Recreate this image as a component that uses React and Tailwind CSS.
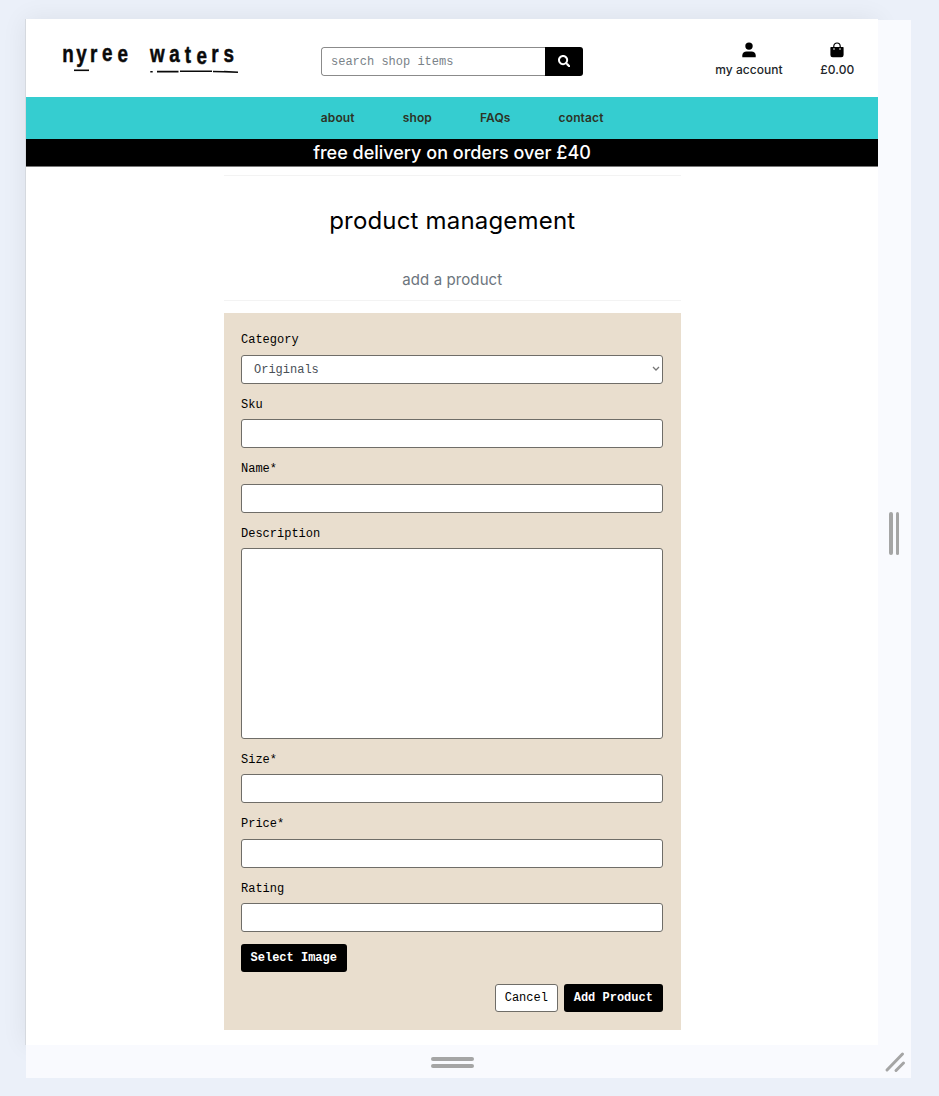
import { FaSearch } from "react-icons/fa";

function Field({ label, children }) {
  return (
    <label className="block">
      <span className="block h-[35.7px] pt-[12.1px] text-[12px] leading-[18px] text-black">{label}</span>
      {children || (
        <input className="block h-[28.8px] w-full rounded-[3px] border border-[#6f6d68] bg-white px-3 outline-none" />
      )}
    </label>
  );
}

function Logo() {
  return (
    <svg width="180" height="36" viewBox="60 40 180 36" className="block">
      <g
        transform="scale(0.8 1)"
        fontFamily="'Liberation Sans', sans-serif"
        fontWeight="700"
        fontSize="23.5"
        fill="#0a0a0a"
        stroke="#0a0a0a"
        strokeWidth="0.5"
      >
        <text x="77.8 95.3 112.6 127.6 147" y="61.6 61.6 61.6 60.6 61.9">nyree</text>
        <text x="187.5 211.6 231 245.6 264 279.4" y="62 62 62.8 63.9 62 62">waters</text>
      </g>
      <g stroke="#0a0a0a" strokeWidth="1.6" fill="none">
        <path d="M74 70.3H89" />
        <path d="M150.3 71.8h2.4M157 71.6h21.500M180 71.200h32M213 71.500l11 .3M224 71.600l14 .6" />
      </g>
    </svg>
  );
}

function BagIcon() {
  return (
    <svg width="14" height="16" viewBox="0 0 14 16" className="block">
      <path d="M3.8 6V4.200a3.200 3.200 0 0 1 6.400 0V6" fill="none" stroke="#000" strokeWidth="1.2" />
      <path d="M1 5h12a.6.6 0 0 1 .6.6V13a2.300 2.300 0 0 1-2.300 2.300H2.700A2.300 2.300 0 0 1 .4 13V5.600A.6.6 0 0 1 1 5Z" />
      <circle cx="4" cy="7" r=".8" fill="#fff" />
      <circle cx="10" cy="7" r=".8" fill="#fff" />
    </svg>
  );
}

function PersonIcon() {
  return (
    <svg width="14" height="16" viewBox="0 0 14 16" className="block">
      <circle cx="7" cy="4.100" r="3.700" />
      <path d="M.3 15.300V13.500C.3 11 2.200 9.500 4.500 9.500h5c2.300 0 4.200 1.500 4.200 4v1.800Z" />
    </svg>
  );
}

function Header() {
  return (
    <header className="flex h-[78px] items-start">
      <div className="w-[294.500px] pl-[34px] pt-[21px]">
        <Logo />
      </div>
      <div className="mt-[27.500px] flex h-[29px] w-[262px] overflow-hidden rounded-[3px] font-['Liberation_Mono',monospace]">
        <input
          placeholder="search shop items"
          className="w-[224.500px] rounded-l-[3px] border border-r-0 border-[#8b8b8b] bg-white pl-[9.500px] pt-[2px] text-[12px] outline-none placeholder:text-[#7a8288]"
        />
        <button className="flex flex-1 items-center justify-center bg-black text-white">
          <FaSearch size={12.5} />
        </button>
      </div>
      <div className="ml-[121.500px] mt-[23px] flex w-[90px] flex-col items-center text-[12px] font-medium leading-[18px] text-[#212529]">
        <PersonIcon />
        <span className="mt-[3px] tracking-[0.03px]">my account</span>
      </div>
      <div className="ml-[13.300px] mt-[23px] flex w-[60px] flex-col items-center text-[12px] font-medium leading-[18px] text-[#212529]">
        <BagIcon />
        <span className="mt-[3px] tracking-[0.1px]">£0.00</span>
      </div>
    </header>
  );
}

function ProductForm() {
  return (
    <form className="mt-[12px] h-[717px] bg-[#e9dece] pl-[17.500px] pr-[18.200px] pt-[6.150px] font-['Liberation_Mono',monospace] text-[12px]">
      <Field label="Category">
        <span className="flex h-[28.8px] w-full items-center justify-between rounded-[3px] border border-[#6f6d68] bg-white pl-[12px] pr-[2px] text-[#495057]">
          <span className="pt-px">Originals</span>
          <svg width="8" height="6" viewBox="0 0 8 6" fill="none" stroke="#777" strokeWidth="1.3">
            <path d="M1 1l3 3 3-3" />
          </svg>
        </span>
      </Field>
      <Field label="Sku" />
      <Field label="Name*" />
      <Field label="Description">
        <textarea className="block h-[190.4px] w-full resize-none rounded-[3px] border border-[#6f6d68] bg-white outline-none" />
      </Field>
      <Field label="Size*" />
      <Field label="Price*" />
      <Field label="Rating" />
      <button
        type="button"
        className="mt-[11.800px] block h-[28px] w-[105.500px] rounded-[3px] bg-black font-bold text-white"
      >
        Select Image
      </button>
      <div className="mt-[12px] flex justify-end gap-[6px]">
        <button type="button" className="h-[28px] w-[63px] rounded-[3px] border border-[#6f6d68] bg-white text-black">
          Cancel
        </button>
        <button type="button" className="h-[28px] w-[99px] rounded-[3px] bg-black font-bold text-white">
          Add Product
        </button>
      </div>
    </form>
  );
}

export default function App() {
  return (
    <div className="h-[1096px] w-[939px] overflow-hidden bg-[#ebf0f9] pl-[25px] pt-[19px] font-['Inter',sans-serif]">
      <div className="flex items-start">
        <main className="h-[1026px] w-[853px] border-l border-[#d5d9df] bg-white shadow-[0_0_24px_rgba(0,0,0,0.07)]">
          <Header />
          <nav className="flex h-[42px] items-center gap-[48px] bg-[#35cdd0] pl-[294.800px] text-[12px] font-semibold tracking-[0.13px] text-[#2d3326]">
            <span>about</span>
            <span>shop</span>
            <span>FAQs</span>
            <span>contact</span>
          </nav>
          <div className="h-[28px] border-b border-[#777] bg-black text-center text-[18px] font-medium leading-[28px] text-white">
            free delivery on orders over £40
          </div>
          <section className="ml-[197.500px] w-[457.500px]">
            <div className="mt-[8px] h-px bg-[#f3f3f3]" />
            <h1 className="mt-[27px] text-center text-[24px] leading-[36px] tracking-[0.18px] text-black">
              product management
            </h1>
            <h2 className="mt-[30px] text-center text-[15px] leading-[22px] tracking-[0.1px] text-[#6c757d]">
              add a product
            </h2>
            <div className="mt-[9px] h-px bg-[#f3f3f3]" />
            <ProductForm />
          </section>
        </main>
        <aside className="relative mt-px flex h-[1026px] w-[33px] justify-center gap-[3px] bg-[#f9fafe] pr-[1px] pt-[492px]">
          <span className="h-[43px] w-[3.500px] bg-[#a5a5a5] rounded-full" />
          <span className="h-[43px] w-[3.500px] bg-[#a5a5a5] rounded-full" />
        </aside>
      </div>
      <footer className="relative -mt-px ml-px flex h-[33px] w-[885px] items-center bg-[#f9fafe]">
        <div className="flex w-[852px] flex-col items-center gap-[3px] pt-[2px]">
          <span className="h-[4px] w-[43px] rounded-full bg-[#a5a5a5]" />
          <span className="h-[4px] w-[43px] rounded-full bg-[#a5a5a5]" />
        </div>
        <svg width="33" height="33" viewBox="0 0 33 33" stroke="#a5a5a5" strokeWidth="3" strokeLinecap="round">
          <path d="M9 25L24.500 9M18 25.500L25.500 18" />
        </svg>
      </footer>
    </div>
  );
}
